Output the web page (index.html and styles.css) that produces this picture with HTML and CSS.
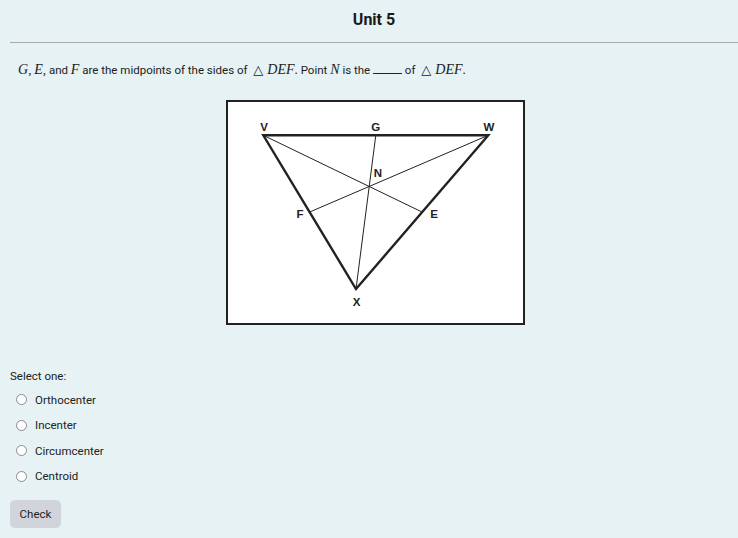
FILE: index.html
```html
<!DOCTYPE html>
<html>
<head>
<meta charset="utf-8">
<link rel="stylesheet" href="styles.css">
</head>
<body>
<div class="page">
  <h1 class="title">Unit 5</h1>
  <hr class="rule">
  <p class="question"><span class="m">G</span><span class="mp">,</span> <span class="m">E</span><span class="mp">,</span> and <span class="m">F</span> are the midpoints of the sides of <span class="mr">△</span><span class="m">DEF</span><span class="mp">.</span> Point <span class="m">N</span> is the <span class="blank"></span> of <span class="mr">△</span><span class="m">DEF</span><span class="mp">.</span></p>
  <div class="figure-wrap">
    <div class="figure">
      <svg width="295" height="221" viewBox="0 0 295 221">
        <g stroke="#222" fill="none">
          <polygon points="35.3,33.3 260.3,33.3 128,187" stroke-width="2.4" stroke-linejoin="miter"/>
          <line x1="35.3" y1="33.3" x2="194" y2="110" stroke-width="1"/>
          <line x1="260.3" y1="33.3" x2="81.7" y2="110" stroke-width="1"/>
          <line x1="147.8" y1="33.3" x2="128" y2="187" stroke-width="1"/>
        </g>
        <g class="lbl" fill="#222" text-anchor="middle">
          <text x="36" y="29">V</text>
          <text x="147.7" y="29">G</text>
          <text x="261" y="29">W</text>
          <text x="150" y="75">N</text>
          <text x="72" y="116">F</text>
          <text x="206" y="116">E</text>
          <text x="128.7" y="203.5">X</text>
        </g>
      </svg>
    </div>
  </div>
  <div class="answers">
    <div class="prompt">Select one:</div>
    <label class="opt"><span class="radio"></span><span>Orthocenter</span></label>
    <label class="opt"><span class="radio"></span><span>Incenter</span></label>
    <label class="opt"><span class="radio"></span><span>Circumcenter</span></label>
    <label class="opt"><span class="radio"></span><span>Centroid</span></label>
  </div>
  <button class="check">Check</button>
</div>
</body>
</html>
```
FILE: styles.css
```css
html, body {
  margin: 0;
  padding: 0;
  background: #e6f2f3;
}
body {
  font-family: Roboto, "Liberation Sans", sans-serif;
  color: #222;
  width: 738px;
  height: 538px;
  overflow: hidden;
}
.page {
  padding: 0 0 0 10px;
}
.title {
  margin: 0;
  padding-top: 10px;
  height: 22px;
  font-size: 16px;
  font-weight: 700;
  text-align: center;
  line-height: 20px;
  color: #1a1a1a;
}
.rule {
  margin: 10px 0 0 0;
  border: 0;
  border-top: 1px solid #a8a8a8;
  height: 0;
}
.question {
  margin: 19px 0 0 8px;
  font-size: 11.5px;
  line-height: 16px;
  color: #222;
}
.m {
  font-family: "Liberation Serif", "DejaVu Serif", serif;
  font-style: italic;
  font-size: 14px;
}
.mp {
  font-family: "Liberation Serif", serif;
  font-size: 13px;
}
.mr {
  font-family: "DejaVu Sans", sans-serif;
  font-size: 13px;
  margin: 0 4px 0 3px;
}
.blank {
  display: inline-block;
  width: 29px;
  border-bottom: 1px solid #222;
  vertical-align: baseline;
}
.figure-wrap {
  display: flex;
  justify-content: center;
  margin-top: 22px;
}
.figure {
  margin-left: 3px;
  border: 2px solid #222;
  background: #fff;
  width: 295px;
  height: 221px;
}
.figure svg {
  display: block;
}
.lbl {
  font-family: "Liberation Sans", Arial, sans-serif;
  font-weight: 700;
  font-size: 11.5px;
}
.answers {
  margin-top: 43px;
  font-size: 11.5px;
}
.prompt {
  line-height: 16px;
  height: 19px;
}
.opt {
  display: flex;
  align-items: center;
  height: 25.5px;
  padding-left: 6px;
  gap: 8px;
}
.radio {
  width: 9px;
  height: 9px;
  border: 1px solid #8a8a8a;
  border-radius: 50%;
  background: #fff;
  flex: none;
}
.check {
  margin-top: 11px;
  width: 51px;
  height: 28px;
  border: 0;
  border-radius: 5px;
  background: #d1d5db;
  color: #222;
  font-family: Roboto, "Liberation Sans", sans-serif;
  font-size: 11.5px;
  padding: 0;
}
```
